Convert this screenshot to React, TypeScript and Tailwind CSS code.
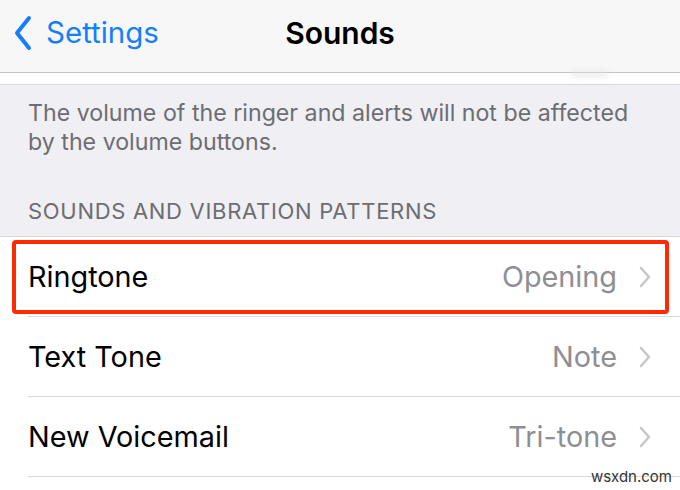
import React from "react";

const Chevron = () => (
  <svg width="14" height="24" viewBox="0 0 14 24" className="shrink-0">
    <path d="M3 3 L11 12 L3 21" fill="none" stroke="#c7c7cc" strokeWidth="2.6" strokeLinecap="round" strokeLinejoin="round" />
  </svg>
);

const Row = ({ label, value, last, highlight }: { label: string; value: string; last?: boolean; highlight?: boolean }) => (
  <div className="relative bg-white h-[80px] flex">
    <div className={`flex-1 ml-[28px] flex items-center pr-[28px] ${last ? "" : "border-b border-[#d9d9dd]"}`}>
      <span className="text-[28.8px] text-black">{label}</span>
      <span className="ml-auto text-[28.8px] text-[#8e8e93] mr-[21px]">{value}</span>
      <Chevron />
    </div>
    {highlight && (
      <div className="absolute left-[12px] right-[11px] top-[3px] bottom-[3px] border-[4px] border-[#ff2a00] rounded-[4px]" />
    )}
  </div>
);

export default function App() {
  return (
    <div className="w-[680px] h-[490px] overflow-hidden bg-[#efeff4] relative" style={{ fontFamily: "Inter, 'Liberation Sans', sans-serif" }}>
      <div className="h-[73px] bg-[#f7f7f7] border-b border-[#c4c4c4] flex items-center pb-[6px] relative">
        <div className="flex items-center ml-[14px] text-[#157efb]">
          <svg width="18" height="36" viewBox="0 0 18 36">
            <path d="M15 3 L3 18 L15 33" fill="none" stroke="#157efb" strokeWidth="4" strokeLinecap="round" strokeLinejoin="round" />
          </svg>
          <span className="text-[29.5px] ml-[14px] leading-none">Settings</span>
        </div>
        <div className="absolute left-0 right-0 text-center text-[30px] font-semibold text-black leading-none">Sounds</div>
      </div>
      <div className="h-[12px] bg-white border-b border-[#d8d8d8] relative">
        <div className="absolute left-[572px] top-[-1px] w-[36px] h-[4px] rounded-full bg-[#e2e2e2] blur-[3px]" />
      </div>
      <div className="px-[28px] pt-[14px] text-[23.2px] leading-[29px] text-[#6d6d72]">
        The volume of the ringer and alerts will not be affected by the volume buttons.
      </div>
      <div className="px-[28px] pt-[41px] pb-[12px] text-[22px] tracking-[0.7px] leading-[26px] text-[#6d6d72] uppercase">
        Sounds and Vibration Patterns
      </div>
      <div className="border-t border-[#d8d8d8]">
        <Row label="Ringtone" value="Opening" highlight />
        <Row label="Text Tone" value="Note" />
        <Row label="New Voicemail" value="Tri-tone" />
        <div className="bg-white h-[20px]" />
      </div>
      <div className="absolute right-[8px] bottom-[2px] text-[15px] text-[#333]">wsxdn.com</div>
    </div>
  );
}
